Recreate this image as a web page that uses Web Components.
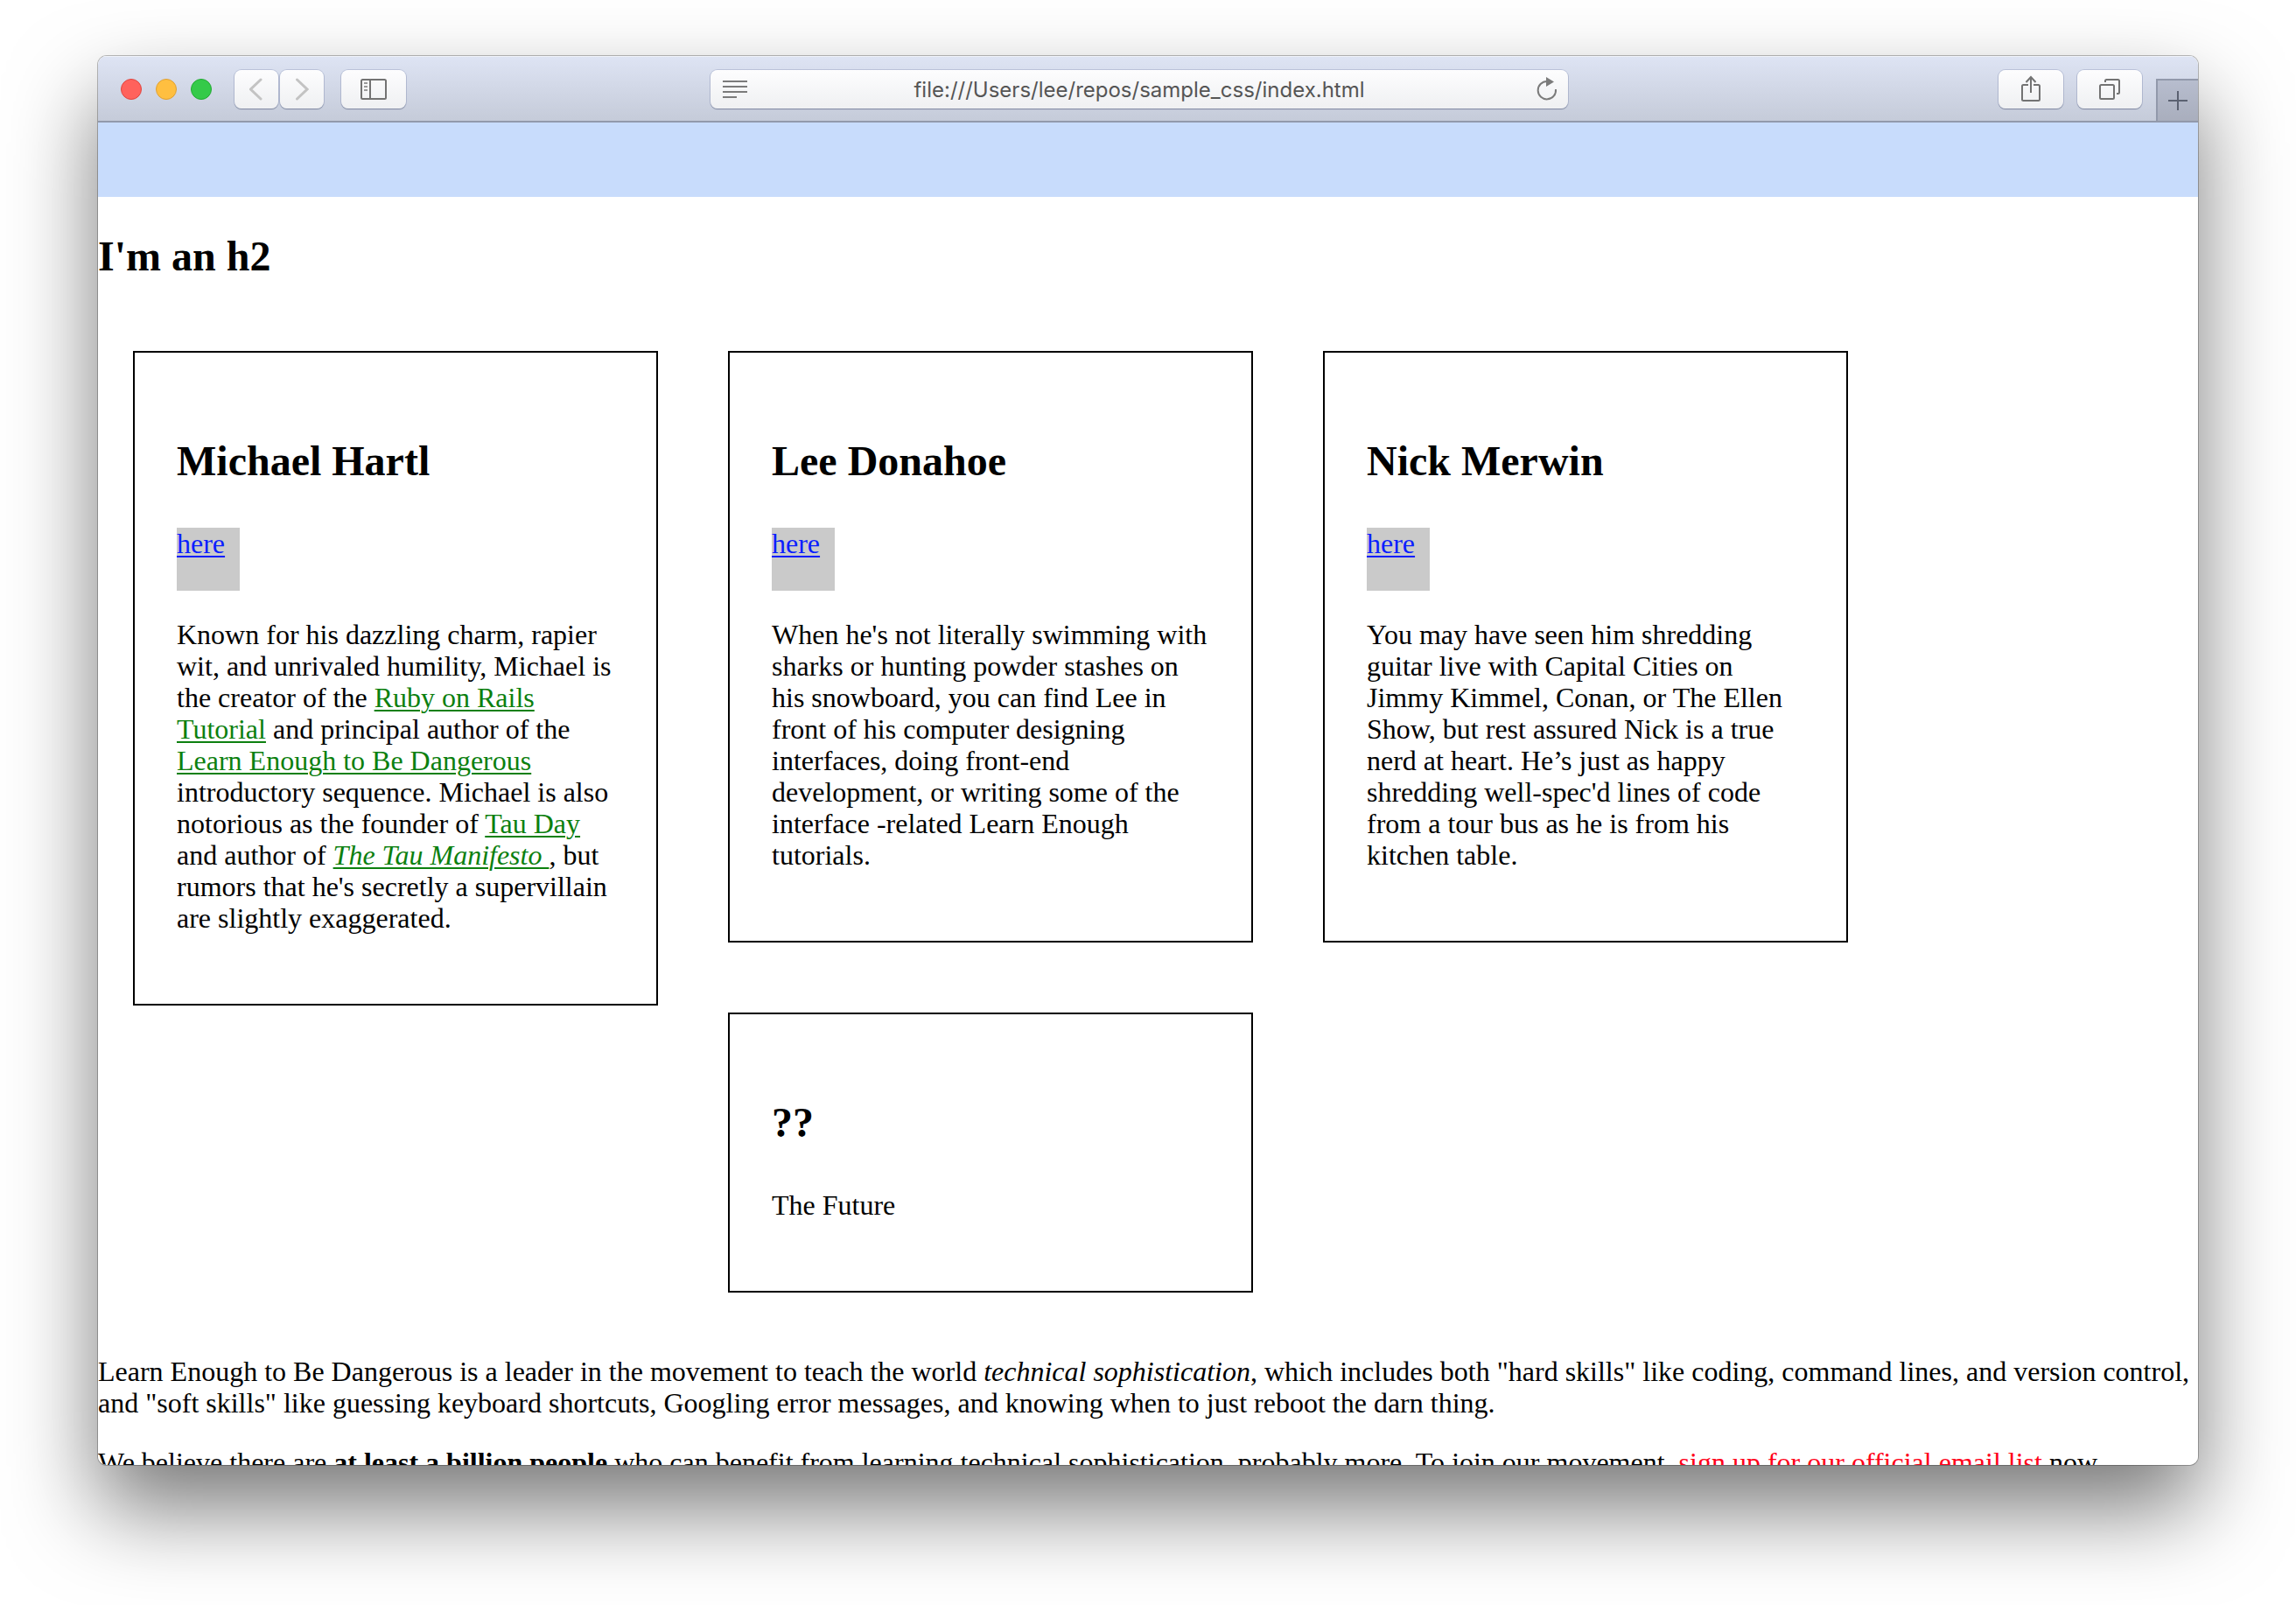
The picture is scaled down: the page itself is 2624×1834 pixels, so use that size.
<!DOCTYPE html>
<html lang="en">
<head>
<meta charset="utf-8">
<title>sample_css</title>
<style>
  html, body { margin: 0; background: #fff; }
  body { box-sizing: border-box; height: 100vh; padding: 64px 112px 160px; overflow: hidden; }
</style>
</head>
<body>
<browser-window>
  <browser-toolbar slot="toolbar" address="file:///Users/lee/repos/sample_css/index.html"></browser-toolbar>
  <sample-page></sample-page>
</browser-window>

<script>
const define = (name, html) => {
  const template = document.createElement('template');
  template.innerHTML = html;
  customElements.define(name, class extends HTMLElement {
    constructor() {
      super();
      this.attachShadow({ mode: 'open' }).append(template.content.cloneNode(true));
    }
    connectedCallback() {
      const root = this.shadowRoot;
      const button = root.querySelector('button[data-host]');
      if (button) button.setAttribute('aria-label', this.getAttribute('label'));
      const input = root.querySelector('input');
      if (input) input.value = this.getAttribute('address');
    }
  });
};

/* Window frame: rounded corners, hairline edge and drop shadow */
define('browser-window', `
  <style>
    :host { display: flex; flex-direction: column; height: 100%; border-radius: 10px;
      box-shadow: 0 0 0 1px rgba(0,0,0,.26), 0 50px 100px rgba(0,0,0,.53); }
    .clip { flex: 1; min-height: 0; display: flex; flex-direction: column; overflow: hidden;
      border-radius: 10px; background: #fff; }
    main { flex: 1; min-height: 0; overflow: hidden; }
  </style>
  <div class="clip"><slot name="toolbar"></slot><main><slot></slot></main></div>`);

define('tool-button', `
  <style>
    :host { display: block; }
    button { display: flex; align-items: center; justify-content: center; box-sizing: border-box;
      width: var(--button-width, 74px); height: 44px; margin: 0; padding: 0; border: 0; border-radius: 8px;
      color: #737373; background: linear-gradient(#fdfdfe, #eff0f2);
      box-shadow: 0 0 0 1px rgba(140,150,185,.4), 0 1px 1px rgba(70,78,100,.6); }
  </style>
  <button type="button" data-host><slot></slot></button>`);

define('browser-toolbar', `
  <style>
    :host { display: flex; align-items: center; flex: none; height: 76px; box-sizing: border-box;
      padding: 2px 0 0 26px; border-bottom: 2px solid #9299ab;
      background: linear-gradient(#dee4f4, #c5cbd9); box-shadow: inset 0 1px #f0f3fa; }
    .left { flex: 1 1 0; display: flex; align-items: center; gap: 20px; }
    .right { flex: 1 1 46px; align-self: stretch; display: flex; align-items: center;
      justify-content: flex-end; gap: 16px; }
    .lights { display: flex; gap: 16px; margin-right: 6px; }
    .lights button { width: 24px; height: 24px; padding: 0; border-radius: 50%;
      border: 1px solid var(--rim); background: var(--fill); }
    .close { --fill: #ff625c; --rim: #e0453f; }
    .min { --fill: #ffbf40; --rim: #dfa033; }
    .max { --fill: #34ca49; --rim: #22aa32; }
    .nav { display: flex; gap: 2px; --button-width: 50px; }
    svg { display: block; fill: none; stroke: currentColor; stroke-width: 2; }
    .nav svg { stroke: #c3c3c3; stroke-width: 3; stroke-linecap: round; }
    form { flex: 0 1 980px; display: flex; align-items: stretch; height: 44px; min-width: 0; border-radius: 8px;
      background: linear-gradient(#fdfdfe, #eff0f2);
      box-shadow: 0 0 0 1px rgba(140,150,185,.4), 0 1px 1px rgba(70,78,100,.6); }
    form button { flex: none; display: flex; align-items: center; justify-content: center; width: 56px;
      padding: 0; border: 0; background: none; color: #7b7b7b; }
    form .reload { width: 48px; }
    input { flex: 1; min-width: 0; padding: 2px 8px 0 0; border: 0; outline: 0; background: none;
      font: 24px/40px Inter, Roboto, sans-serif; color: #555; text-align: center; }
    .tab { align-self: flex-end; box-sizing: border-box; width: 48px; height: 48px; padding: 0; display: flex;
      align-items: center; justify-content: center; border: solid #9299ab; border-width: 2px 0 0 2px;
      background: linear-gradient(#b7bdce, #a9aebd); color: #5b6171; }
  </style>
  <div class="left">
    <div class="lights">
      <button class="close" type="button" aria-label="Close"></button>
      <button class="min" type="button" aria-label="Minimize"></button>
      <button class="max" type="button" aria-label="Zoom"></button>
    </div>
    <div class="nav">
      <tool-button label="Back"><svg width="16" height="26"><path d="M13 2 1.500 13 13 24"/></svg></tool-button>
      <tool-button label="Forward"><svg width="16" height="26"><path d="M2.500 2 14 13 2.500 24"/></svg></tool-button>
    </div>
    <tool-button label="Show sidebar"><svg width="30" height="24"><rect x="1" y="1" width="28" height="22" rx="1.5"/><path d="M11 1v22"/><path d="M4 5h4M4 9h4M4 13h4" stroke="#9a9a9a"/></svg></tool-button>
  </div>
  <form onsubmit="return false">
    <button type="button" aria-label="Reader"><svg width="28" height="20"><path d="M0 1h28M0 7h28M0 13h28M0 19h16"/></svg></button>
    <input type="text" aria-label="Address">
    <button class="reload" type="button" aria-label="Reload"><svg width="24" height="28"><path d="M22 14A10.200 10.200 0 1 1 12 5"/><path d="M11 0v11l9-5.500z" fill="currentColor" stroke="none"/></svg></button>
  </form>
  <div class="right">
    <tool-button label="Share"><svg width="24" height="32"><path d="M9 11H3.500Q2 11 2 12.500V27.500Q2 29 3.500 29h17q1.500 0 1.500-1.500v-15Q22 11 20.500 11H15M12 20V2M6.500 8 12 2l5.500 6"/></svg></tool-button>
    <tool-button label="Show tabs"><svg width="24" height="24"><rect x="1" y="7" width="16" height="16" rx="1.500"/><path d="M7 4V2.500Q7 1 8.500 1h13Q23 1 23 2.500V15.500Q23 17 21.500 17H20"/></svg></tool-button>
    <button class="tab" type="button" aria-label="New tab"><svg width="22" height="22"><path d="M11 0v22M0 11h22"/></svg></button>
  </div>`);

define('bio-card', `
  <style>
    :host { display: block; box-sizing: border-box; padding: 48px; border: 2px solid #000; }
  </style>
  <slot name="name"></slot><slot></slot>`);

define('social-link', `
  <style>
    :host { display: block; width: 72px; height: 72px; background: #cacaca; }
    a { color: #0a1eff; text-decoration-thickness: 2px; text-underline-offset: 3px; }
  </style>
  <a href="#"><slot></slot></a>`);

define('sample-page', `
  <style>
    :host { display: block; font: 32px/36px "Liberation Serif", "Times New Roman", serif; color: #000; }
    header { height: 85px; background: #c8dcfc; }
    h2 { margin: 40px 0; font-size: 48px; line-height: 56px; }
    bio-card h2 { line-height: 72px; }
    p { margin: 32px 0; }
    .bios { display: grid; grid-template-columns: repeat(auto-fill, 600px); gap: 80px; padding: 0 40px;
      margin: 80px 0 72px; align-items: start; }
    .tall { grid-row: span 2; }
    .future { grid-column: 2; }
    .bio-text a { color: #0c800f; text-decoration-thickness: 2px; text-underline-offset: 3px; }
    .signup { color: #ff0019; text-decoration: none; }
  </style>
  <header></header>
  <h2>I'm an h2</h2>
  <section class="bios">
    <bio-card class="tall">
      <h2 slot="name">Michael Hartl</h2>
      <social-link>here</social-link>
      <p class="bio-text">Known for his dazzling charm, rapier wit, and unrivaled humility, Michael is the creator of the <a href="#">Ruby on Rails Tutorial</a> and principal author of the <a href="#">Learn Enough to Be Dangerous</a> introductory sequence. Michael is also notorious as the founder of <a href="#">Tau Day</a> and author of <a href="#"><em>The Tau Manifesto </em></a>, but rumors that he's secretly a supervillain are slightly exaggerated.</p>
    </bio-card>
    <bio-card>
      <h2 slot="name">Lee Donahoe</h2>
      <social-link>here</social-link>
      <p>When he's not literally swimming with sharks or hunting powder stashes on his snowboard, you can find Lee in front of his computer designing interfaces, doing front-end development, or writing some of the interface -related Learn Enough tutorials.</p>
    </bio-card>
    <bio-card>
      <h2 slot="name">Nick Merwin</h2>
      <social-link>here</social-link>
      <p>You may have seen him shredding guitar live with Capital Cities on Jimmy Kimmel, Conan, or The Ellen Show, but rest assured Nick is a true nerd at heart. He’s just as happy shredding well-spec'd lines of code from a tour bus as he is from his kitchen table.</p>
    </bio-card>
    <bio-card class="future">
      <h2 slot="name">??</h2>
      <p>The Future</p>
    </bio-card>
  </section>
  <p>Learn Enough to Be Dangerous is a leader in the movement to teach the world <em>technical sophistication</em>, which includes both "hard skills" like coding, command lines, and version control, and "soft skills" like guessing keyboard shortcuts, Googling error messages, and knowing when to just reboot the darn thing.</p>
  <p>We believe there are <strong>at least a billion people</strong> who can benefit from learning technical sophistication, probably more. To join our movement, <a class="signup" href="#">sign up for our official email list</a> now.</p>`);
</script>
</body>
</html>
